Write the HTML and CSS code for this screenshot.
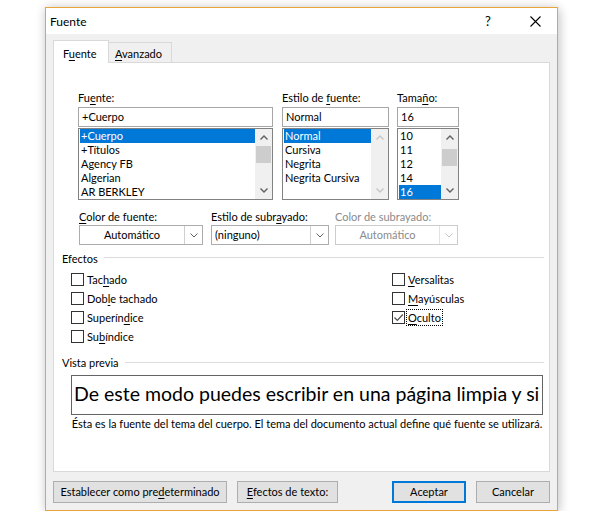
FILE: index.html
```html
<!DOCTYPE html>
<html lang="es">
<head>
<meta charset="utf-8">
<title>Fuente</title>
<link rel="stylesheet" href="styles.css">
</head>
<body>
<div class="dialog">
  <div class="titlebar">
    <span class="title">Fuente</span>
    <span class="help">?</span>
    <span class="close"><svg width="11" height="11" viewBox="0 0 11 11"><path d="M0.5 0.5 L10.5 10.5 M10.5 0.5 L0.5 10.5" stroke="#000" stroke-width="1.1" fill="none"/></svg></span>
  </div>
  <div class="body">
    <div class="tabs">
      <div class="tab active">F<u>u</u>ente</div>
      <div class="tab"><u>A</u>vanzado</div>
    </div>
    <div class="panel">
      <div class="fontrow">
        <div class="col col-font">
          <div class="lbl">Fu<u>e</u>nte:</div>
          <div class="input">+Cuerpo</div>
          <div class="list">
            <div class="items">
              <div class="item sel">+Cuerpo</div>
              <div class="item">+Títulos</div>
              <div class="item">Agency FB</div>
              <div class="item">Algerian</div>
              <div class="item">AR BERKLEY</div>
            </div>
            <div class="sbar">
              <div class="sbtn"><svg width="8" height="5" viewBox="0 0 8 5"><path d="M0.5 4.5 L4 1 L7.5 4.5" stroke="#606060" stroke-width="1.4" fill="none"/></svg></div>
              <div class="track"><div class="thumb thumb-font"></div></div>
              <div class="sbtn"><svg width="8" height="5" viewBox="0 0 8 5"><path d="M0.5 0.5 L4 4 L7.5 0.5" stroke="#606060" stroke-width="1.4" fill="none"/></svg></div>
            </div>
          </div>
        </div>
        <div class="col col-style">
          <div class="lbl">Estilo de <u>f</u>uente:</div>
          <div class="input">Normal</div>
          <div class="list">
            <div class="items">
              <div class="item sel">Normal</div>
              <div class="item">Cursiva</div>
              <div class="item">Negrita</div>
              <div class="item">Negrita Cursiva</div>
            </div>
            <div class="sbar">
              <div class="sbtn"><svg width="8" height="5" viewBox="0 0 8 5"><path d="M0.5 4.5 L4 1 L7.5 4.5" stroke="#c6c6c6" stroke-width="1.4" fill="none"/></svg></div>
              <div class="track"></div>
              <div class="sbtn"><svg width="8" height="5" viewBox="0 0 8 5"><path d="M0.5 0.5 L4 4 L7.5 0.5" stroke="#c6c6c6" stroke-width="1.4" fill="none"/></svg></div>
            </div>
          </div>
        </div>
        <div class="col col-size">
          <div class="lbl">Tama<u>ñ</u>o:</div>
          <div class="input">16</div>
          <div class="list">
            <div class="items">
              <div class="item">10</div>
              <div class="item">11</div>
              <div class="item">12</div>
              <div class="item">14</div>
              <div class="item sel">16</div>
            </div>
            <div class="sbar">
              <div class="sbtn"><svg width="8" height="5" viewBox="0 0 8 5"><path d="M0.5 4.5 L4 1 L7.5 4.5" stroke="#606060" stroke-width="1.4" fill="none"/></svg></div>
              <div class="track"><div class="thumb thumb-size"></div></div>
              <div class="sbtn"><svg width="8" height="5" viewBox="0 0 8 5"><path d="M0.5 0.5 L4 4 L7.5 0.5" stroke="#606060" stroke-width="1.4" fill="none"/></svg></div>
            </div>
          </div>
        </div>
      </div>

      <div class="comborow">
        <div class="ccol ccol-1">
          <div class="lbl"><u>C</u>olor de fuente:</div>
          <div class="combo">
            <div class="cval center">Automático</div>
            <div class="cbtn"><svg width="8" height="5" viewBox="0 0 8 5"><path d="M0.5 0.5 L4 4 L7.5 0.5" stroke="#606060" stroke-width="1" fill="none"/></svg></div>
          </div>
        </div>
        <div class="ccol ccol-2">
          <div class="lbl">Estilo de subr<u>a</u>yado:</div>
          <div class="combo">
            <div class="cval">(ninguno)</div>
            <div class="cbtn"><svg width="8" height="5" viewBox="0 0 8 5"><path d="M0.5 0.5 L4 4 L7.5 0.5" stroke="#606060" stroke-width="1" fill="none"/></svg></div>
          </div>
        </div>
        <div class="ccol ccol-3 disabled">
          <div class="lbl">Color de subrayado:</div>
          <div class="combo">
            <div class="cval center">Automático</div>
            <div class="cbtn"><svg width="8" height="5" viewBox="0 0 8 5"><path d="M0.5 0.5 L4 4 L7.5 0.5" stroke="#c6c6c6" stroke-width="1" fill="none"/></svg></div>
          </div>
        </div>
      </div>

      <div class="group group-effects">
        <div class="ghead"><span class="glabel">Efectos</span><span class="gline"></span></div>
        <div class="checks">
          <div class="chk"><span class="box"></span><span class="clbl">Tac<u>h</u>ado</span></div>
          <div class="chk"><span class="box"></span><span class="clbl"><u>V</u>ersalitas</span></div>
          <div class="chk"><span class="box"></span><span class="clbl">Dob<u>l</u>e tachado</span></div>
          <div class="chk"><span class="box"></span><span class="clbl"><u>M</u>ayúsculas</span></div>
          <div class="chk"><span class="box"></span><span class="clbl">Superín<u>d</u>ice</span></div>
          <div class="chk"><span class="box checked"><svg width="11" height="11" viewBox="0 0 11 11"><path d="M1.5 5.5 L4.3 8.3 L9.8 2.5" stroke="#4d4d4d" stroke-width="1.2" fill="none"/></svg></span><span class="clbl focus"><u>O</u>culto</span></div>
          <div class="chk"><span class="box"></span><span class="clbl">Su<u>b</u>índice</span></div>
        </div>
      </div>

      <div class="group group-preview">
        <div class="ghead"><span class="glabel">Vista previa</span><span class="gline"></span></div>
        <div class="preview">De este modo puedes escribir en una página limpia y si</div>
        <div class="desc">Ésta es la fuente del tema del cuerpo. El tema del documento actual define qué fuente se utilizará.</div>
      </div>
    </div>

    <div class="buttons">
      <div class="btn btn-default">Establecer como pre<u>d</u>eterminado</div>
      <div class="btn btn-effects"><u>E</u>fectos de texto:</div>
      <div class="spacer"></div>
      <div class="btn btn-ok">Aceptar</div>
      <div class="btn btn-cancel">Cancelar</div>
    </div>
  </div>
</div>
</body>
</html>
```

FILE: styles.css
```css
* { box-sizing: border-box; }

body {
  margin: 0;
  background: #ffffff;
  font-family: Lato, "Liberation Sans", sans-serif;
  font-size: 11px;
  color: #000;
}

u { text-decoration: underline; text-underline-offset: 2px; }

.dialog {
  margin: 7px 0 0 45px;
  width: 513px;
  height: 504px;
  border: 1px solid #e9a33b;
  background: #f0f0f0;
  box-shadow: 0 0 10px rgba(0,0,0,0.16), 3px 3px 10px rgba(0,0,0,0.10);
  display: flex;
  flex-direction: column;
}

.titlebar {
  height: 26px;
  background: #fff;
  display: flex;
  align-items: center;
  flex-shrink: 0;
}
.title { flex: 1; padding-left: 4px; font-size: 12px; }
.help { width: 46px; text-align: center; font-size: 13px; }
.close { width: 44px; display: flex; justify-content: center; align-items: center; margin-left: 2px; }

.body {
  flex: 1;
  display: flex;
  flex-direction: column;
  padding: 6px 7px 7px 7px;
}

.tabs {
  display: flex;
  align-items: flex-end;
  height: 22px;
}
.tab {
  height: 20px;
  border: 1px solid #d9d9d9;
  border-bottom: none;
  background: #f0f0f0;
  padding: 3px 6px 0 6px;
  line-height: 15px;
}
.tab.active {
  height: 23px;
  margin-bottom: -1px;
  background: #fff;
  position: relative;
  z-index: 1;
  width: 56px;
  padding: 5px 0 0 9px;
}
.tab + .tab { border-left: none; width: 63px; }

.panel {
  height: 410px;
  border: 1px solid #d9d9d9;
  background: #fff;
  padding-top: 27px;
}

.lbl { height: 16px; line-height: 16px; margin-bottom: 0; white-space: nowrap; }

.fontrow { display: flex; padding-left: 24px; }
.col-font { width: 195px; }
.col-style { width: 107px; margin-left: 9px; }
.col-size { width: 62px; margin-left: 8px; }

.input {
  height: 20px;
  border: 1px solid #a6a6a6;
  line-height: 18px;
  padding-left: 3px;
  margin-top: 1px;
  margin-bottom: 1px;
  white-space: nowrap;
}

.list {
  height: 72px;
  border: 1px solid #828282;
  display: flex;
}
.items { flex: 1; padding-left: 1px; overflow: hidden; }
.item { height: 14px; line-height: 14px; padding-left: 1px; white-space: nowrap; }
.item.sel { background: #0078d7; color: #fff; }

.sbar { width: 17px; background: #f0f0f0; display: flex; flex-direction: column; }
.sbtn { height: 17px; display: flex; align-items: center; justify-content: center; }
.track { flex: 1; position: relative; }
.thumb { position: absolute; left: 1px; right: 1px; height: 17px; background: #cdcdcd; }
.thumb-font { top: 0; }
.thumb-size { top: 3px; }

.comborow { display: flex; padding-left: 25px; margin-top: 9px; }
.ccol-1 { width: 124px; }
.ccol-2 { width: 118px; margin-left: 8px; }
.ccol-3 { width: 123px; margin-left: 6px; }
.combo {
  height: 20px;
  border: 1px solid #acacac;
  background: #fff;
  display: flex;
}
.cval { flex: 1; line-height: 18px; padding-left: 3px; white-space: nowrap; }
.cval.center { text-align: center; padding-left: 0; }
.cbtn { width: 18px; border-left: 1px solid #cfcfcf; display: flex; align-items: center; justify-content: center; }
.disabled .lbl, .disabled .cval { color: #8a8a8a; }
.disabled .combo { border-color: #cccccc; }
.disabled .cbtn { border-left-color: #e2e2e2; }

.group-effects { margin-top: 6px; }
.ghead { display: flex; align-items: flex-start; height: 16px; }
.glabel { padding-left: 8px; line-height: 16px; white-space: nowrap; }
.gline { flex: 1; height: 1px; background: #dcdcdc; margin: 6px 5px 0 6px; }
.group-preview .gline { margin-top: 7px; margin-left: 6px; }

.checks {
  margin-top: 3px;
  padding-left: 17px;
  display: grid;
  grid-template-columns: 321px auto;
  grid-auto-rows: 19px;
}
.chk { display: flex; align-items: center; }
.box {
  width: 13px;
  height: 13px;
  border: 1px solid #333;
  background: #fff;
  display: flex;
  align-items: center;
  justify-content: center;
}
.clbl { margin-left: 3px; line-height: 15px; white-space: nowrap; }
.clbl.focus { outline: 1px dotted #000; outline-offset: 0; padding: 0 1px; margin-left: 2px; }

.group-preview { margin-top: 9px; }
.preview {
  margin: 4px 0 0 17px;
  width: 472px;
  height: 40px;
  border: 1px solid #646464;
  font-size: 19.5px;
  line-height: 36px;
  padding-left: 2px;
  white-space: nowrap;
  overflow: hidden;
}
.desc {
  margin: 1px 0 0 16px;
  width: 474px;
  text-align: center;
  line-height: 16px;
  white-space: nowrap;
}

.buttons { display: flex; margin-top: 9px; height: 22px; }
.btn {
  height: 22px;
  border: 1px solid #adadad;
  background: #e1e1e1;
  text-align: center;
  line-height: 20px;
  white-space: nowrap;
}
.btn-default { width: 174px; }
.btn-effects { width: 101px; margin-left: 10px; }
.spacer { flex: 1; }
.btn-ok { width: 74px; border: 2px solid #0078d7; line-height: 18px; }
.btn-cancel { width: 74px; margin-left: 10px; }
```
